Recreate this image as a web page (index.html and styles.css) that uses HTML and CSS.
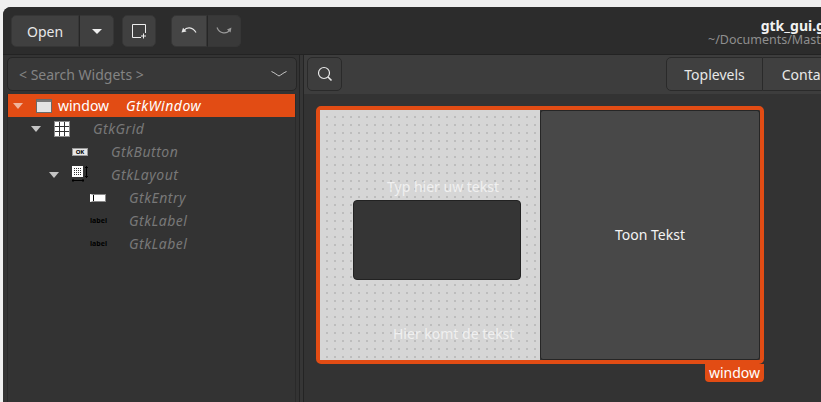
FILE: index.html
```html
<!DOCTYPE html>
<html>
  <head>
    <meta charset="utf-8">
    <title>Glade</title>
    <meta name="viewport" content="width=device-width, initial-scale=1">
    <link rel="stylesheet" href="styles.css">
  </head>
  <body>
    <div class="window">
      <header class="header">
        <div class="btn-group open-group">
          <button class="btn open-btn">Open</button>
          <button class="btn arrow-btn"><span class="caret"></span></button>
        </div>
        <button class="btn new-btn">
          <svg width="16" height="16" viewBox="0 0 16 16" fill="none" stroke="#eee" stroke-width="1">
            <path d="M10 14.500H1.500V1.500H14.500V10"/>
            <path d="M12.500 10.500v5M10 13h5"/>
          </svg>
        </button>
        <div class="btn-group undo-group">
          <button class="btn undo-btn">
            <svg width="16" height="10" viewBox="0 0 16 10" fill="none" stroke="#e6e6e6" stroke-width="1.200">
              <path d="M3 4.500C5.500 .8 11.500 .6 15 6.500"/>
              <path d="M0.500 6.500L2 1.800 5.500 5.500z" fill="#e6e6e6" stroke="none"/>
            </svg>
          </button>
          <button class="btn redo-btn">
            <svg width="16" height="10" viewBox="0 0 16 10" fill="none" stroke="#9a9a9a" stroke-width="1.200">
              <path d="M1 1.500C3.500 8 11 8.500 13.500 4"/>
              <path d="M15.500 1.500L11 3.500 14.500 6.500z" fill="#9a9a9a" stroke="none"/>
            </svg>
          </button>
        </div>
        <div class="title-box">
          <div class="title">gtk_gui.glade</div>
          <div class="subtitle">~/Documents/Master/Thesis/code</div>
        </div>
      </header>

      <div class="content">
        <aside class="side">
          <div class="search-widgets">
            <span>&lt; Search Widgets &gt;</span>
            <svg width="16" height="6" viewBox="0 0 16 6" fill="none" stroke="#c8c8c8" stroke-width="1">
              <path d="M.5 .5C4 2 6 4 8 5 10 4 12 2 15.500 .5"/>
            </svg>
          </div>
          <ul class="tree">
            <li class="row selected">
              <span class="tri"></span>
              <span class="icon">
                <svg width="16" height="14" viewBox="0 0 16 14">
                  <rect x=".5" y=".5" width="15" height="13" fill="#e4e4e4" stroke="#6a6a6a"/>
                  <rect x="1" y="1" width="14" height="2" fill="#777"/>
                </svg>
              </span>
              <span class="name">window</span>
              <span class="type">GtkWindow</span>
            </li>
            <li class="row depth-1">
              <span class="tri"></span>
              <span class="icon">
                <svg width="16" height="16" viewBox="0 0 16 16">
                  <rect width="16" height="16" fill="#8a8a8a"/>
                  <path d="M1 1h14v14H1z" fill="#fff"/>
                  <path d="M5.500 1v14M10.500 1v14M1 5.500h14M1 10.500h14" stroke="#333" stroke-width="1"/>
                </svg>
              </span>
              <span class="type">GtkGrid</span>
            </li>
            <li class="row depth-2">
              <span class="tri none"></span>
              <span class="icon">
                <span class="ok-icon">OK</span>
              </span>
              <span class="type">GtkButton</span>
            </li>
            <li class="row depth-2">
              <span class="tri"></span>
              <span class="icon">
                <svg width="16" height="17" viewBox="0 0 16 17">
                  <rect width="11" height="11" fill="#fff"/>
                  <path d="M2 2h1v1H2zM4 2h1v1H4zM6 2h1v1H6zM8 2h1v1H8zM2 4h1v1H2zM4 4h1v1H4zM6 4h1v1H6zM8 4h1v1H8zM2 6h1v1H2zM4 6h1v1H4zM6 6h1v1H6zM8 6h1v1H8zM2 8h1v1H2zM4 8h1v1H4zM6 8h1v1H6zM8 8h1v1H8z" fill="#333"/>
                  <path d="M14.500 0v12M13 1.500h3M13 10.500h3M0 14.500h12M1 13v3M11 13v3" stroke="#000" stroke-width="1" fill="none"/>
                </svg>
              </span>
              <span class="type">GtkLayout</span>
            </li>
            <li class="row depth-3">
              <span class="tri none"></span>
              <span class="icon"><span class="entry-icon"></span></span>
              <span class="type">GtkEntry</span>
            </li>
            <li class="row depth-3">
              <span class="tri none"></span>
              <span class="icon"><span class="label-icon">label</span></span>
              <span class="type">GtkLabel</span>
            </li>
            <li class="row depth-3">
              <span class="tri none"></span>
              <span class="icon"><span class="label-icon">label</span></span>
              <span class="type">GtkLabel</span>
            </li>
          </ul>
        </aside>

        <div class="pane-handle"></div>

        <main class="main">
          <div class="toolbar">
            <button class="btn search-btn">
              <svg width="16" height="16" viewBox="0 0 16 16" fill="none" stroke="#e8e8e8" stroke-width="1.200">
                <circle cx="7" cy="7" r="5.500"/>
                <path d="M11 11l3.500 3.500" stroke-width="1.600"/>
              </svg>
            </button>
            <div class="tabs">
              <button class="tab">Toplevels</button>
              <button class="tab">Containers</button>
            </div>
          </div>
          <div class="canvas">
            <div class="frame">
              <div class="layout">
                <span class="fixed-label label-top">Typ hier uw tekst</span>
                <div class="entry"></div>
                <span class="fixed-label label-bottom">Hier komt de tekst</span>
              </div>
              <div class="show-btn">Toon Tekst</div>
            </div>
            <div class="frame-tag-row"><span class="frame-tag">window</span></div>
          </div>
        </main>
      </div>
    </div>
  </body>
</html>
```

FILE: styles.css
```css
* {
  box-sizing: border-box;
}

html, body {
  height: 100%;
}

body {
  margin: 0;
  overflow: hidden;
  background-color: #efefef;
  font-family: "Noto Sans", sans-serif;
  font-size: 14px;
  color: #e8e8e8;
}

button {
  font: inherit;
  color: inherit;
  padding: 0;
}

.window {
  width: 818px;
  height: 395px;
  margin: 7px 0 0 3px;
  border-radius: 8px 0 0 0;
  background-color: #333;
  display: flex;
  flex-direction: column;
  overflow: hidden;
}

/* barra de arriba */
.header {
  height: 48px;
  flex: none;
  padding: 8px 0 0 8px;
  display: flex;
  align-items: flex-start;
  background-color: #2c2c2c;
  border-bottom: 1px solid #232323;
}

.btn {
  height: 32px;
  flex: none;
  border: 1px solid #363636;
  border-radius: 5px;
  background-color: #404040;
  display: flex;
  align-items: center;
  justify-content: center;
}

.btn-group {
  display: flex;
  flex: none;
}

.btn-group .btn:first-child {
  border-radius: 5px 0 0 5px;
}

.btn-group .btn:last-child {
  border-radius: 0 5px 5px 0;
  border-left: 1px solid #262626;
}

.open-btn {
  width: 68px;
}

.arrow-btn {
  width: 35px;
}

.caret {
  border-style: solid;
  border-width: 5px 5px 0;
  border-color: #eee transparent transparent;
}

.new-btn {
  width: 34px;
  margin-left: 8px;
}

.undo-group {
  margin-left: 15px;
}

.undo-btn {
  width: 36px;
  background-color: #454545;
}

.redo-btn {
  width: 34px;
  background-color: #393939;
}

.title-box {
  margin-left: 467px;
  padding-top: 4px;
  display: flex;
  flex-direction: column;
  align-items: center;
  flex: none;
}

.title {
  font-weight: bold;
  line-height: 14px;
  color: #f2f2f2;
}

.subtitle {
  font-size: 12.5px;
  line-height: 14px;
  color: #8f8f8f;
}

.content {
  flex: 1;
  display: flex;
  min-height: 0;
}

/* panel izquierdo */
.side {
  width: 296px;
  flex: none;
  padding: 2px 0 0 4px;
  background-color: #333;
  display: flex;
  flex-direction: column;
}

.search-widgets {
  width: 290px;
  height: 34px;
  flex: none;
  padding: 0 9px 0 11px;
  border: 1px solid #262626;
  border-radius: 5px;
  background-color: #383838;
  color: #848484;
  display: flex;
  align-items: center;
  justify-content: space-between;
}

.tree {
  list-style: none;
  flex: 1;
  margin: 3px 0 0;
  padding: 0;
  width: 289px;
  border-left: 1px solid #2a2a2a;
  border-right: 1px solid #2a2a2a;
}

.row {
  height: 23px;
  padding-left: 5px;
  display: flex;
  align-items: center;
  color: #787878;
}

.selected {
  background-color: #e24c14;
  color: #fff;
}

.depth-1 {
  padding-left: 23px;
}

.depth-2 {
  padding-left: 41px;
}

.depth-3 {
  padding-left: 59px;
}

.tri {
  width: 23px;
  height: 6px;
  flex: none;
  position: relative;
}

.tri::before {
  content: "";
  position: absolute;
  left: 0;
  top: 0;
  border-style: solid;
  border-width: 6px 5px 0;
  border-color: #c4c4c4 transparent transparent;
}

.selected .tri::before {
  border-top-color: #f0b49c;
}

.tri.none::before {
  display: none;
}

.icon {
  width: 22px;
  flex: none;
  display: flex;
  align-items: center;
}

.name {
  width: 51px;
}

.type {
  margin-left: 17px;
  font-style: italic;
  letter-spacing: .5px;
}

.ok-icon {
  width: 16px;
  height: 8px;
  background-color: #e8e8e8;
  border: 1px solid #999;
  color: #000;
  font-size: 6px;
  font-weight: bold;
  line-height: 6px;
  text-align: center;
}

.entry-icon {
  width: 16px;
  height: 8px;
  background-color: #fff;
  border: 1px solid #888;
  border-left: 3px solid #fff;
}

.entry-icon::before {
  content: "";
  display: block;
  width: 1px;
  height: 6px;
  background-color: #000;
}

.label-icon {
  color: #000;
  font-size: 7px;
  font-weight: bold;
  line-height: 8px;
}

.pane-handle {
  width: 5px;
  flex: none;
  background-color: #363636;
  border-left: 1px solid #242424;
  border-right: 1px solid #242424;
}

/* panel derecho */
.main {
  flex: 1;
  min-width: 0;
  display: flex;
  flex-direction: column;
}

.toolbar {
  height: 39px;
  flex: none;
  padding: 2px 0 0 3px;
  background-color: #3d3d3d;
  display: flex;
  align-items: flex-start;
}

.search-btn {
  width: 35px;
  height: 34px;
  border-color: #2a2a2a;
  background-color: #3d3d3d;
}

.tabs {
  margin-left: 324px;
  display: flex;
  flex: none;
}

.tab {
  height: 34px;
  flex: none;
  border: 1px solid #2a2a2a;
  background-color: #404040;
}

.tab:first-child {
  width: 97px;
  border-radius: 5px 0 0 5px;
}

.tab:last-child {
  width: 110px;
  border-left: 0;
}

.canvas {
  flex: 1;
  padding: 12px 0 0 12px;
  background-color: #333;
}

.frame {
  width: 448px;
  height: 258px;
  border: 4px solid #e24c14;
  border-radius: 5px;
  display: flex;
}

.layout {
  width: 220px;
  flex: none;
  position: relative;
  background-color: #bdbdbd;
  background-image:
    linear-gradient(to bottom, transparent 2px, #d6d6d6 2px),
    linear-gradient(to right, transparent 2px, #d6d6d6 2px);
  background-size: 8px 8px;
  background-position: 6px 6px;
}

.fixed-label {
  position: absolute;
  color: #f0f0f0;
  line-height: 18px;
  white-space: nowrap;
}

.label-top {
  left: 67px;
  top: 68px;
}

.label-bottom {
  left: 73px;
  top: 215px;
}

.entry {
  position: absolute;
  left: 33px;
  top: 90px;
  width: 168px;
  height: 80px;
  background-color: #353535;
  border: 1px solid #222;
  border-radius: 4px;
}

.show-btn {
  flex: 1;
  padding-bottom: 2px;
  background-color: #484848;
  border: 1px solid #262626;
  border-radius: 3px;
  display: flex;
  align-items: center;
  justify-content: center;
  color: #f4f4f4;
}

.frame-tag-row {
  width: 448px;
  display: flex;
  justify-content: flex-end;
}

.frame-tag {
  width: 59px;
  height: 18px;
  background-color: #e24c14;
  border-radius: 0 0 4px 4px;
  color: #fff;
  line-height: 17px;
  text-align: center;
}
```
